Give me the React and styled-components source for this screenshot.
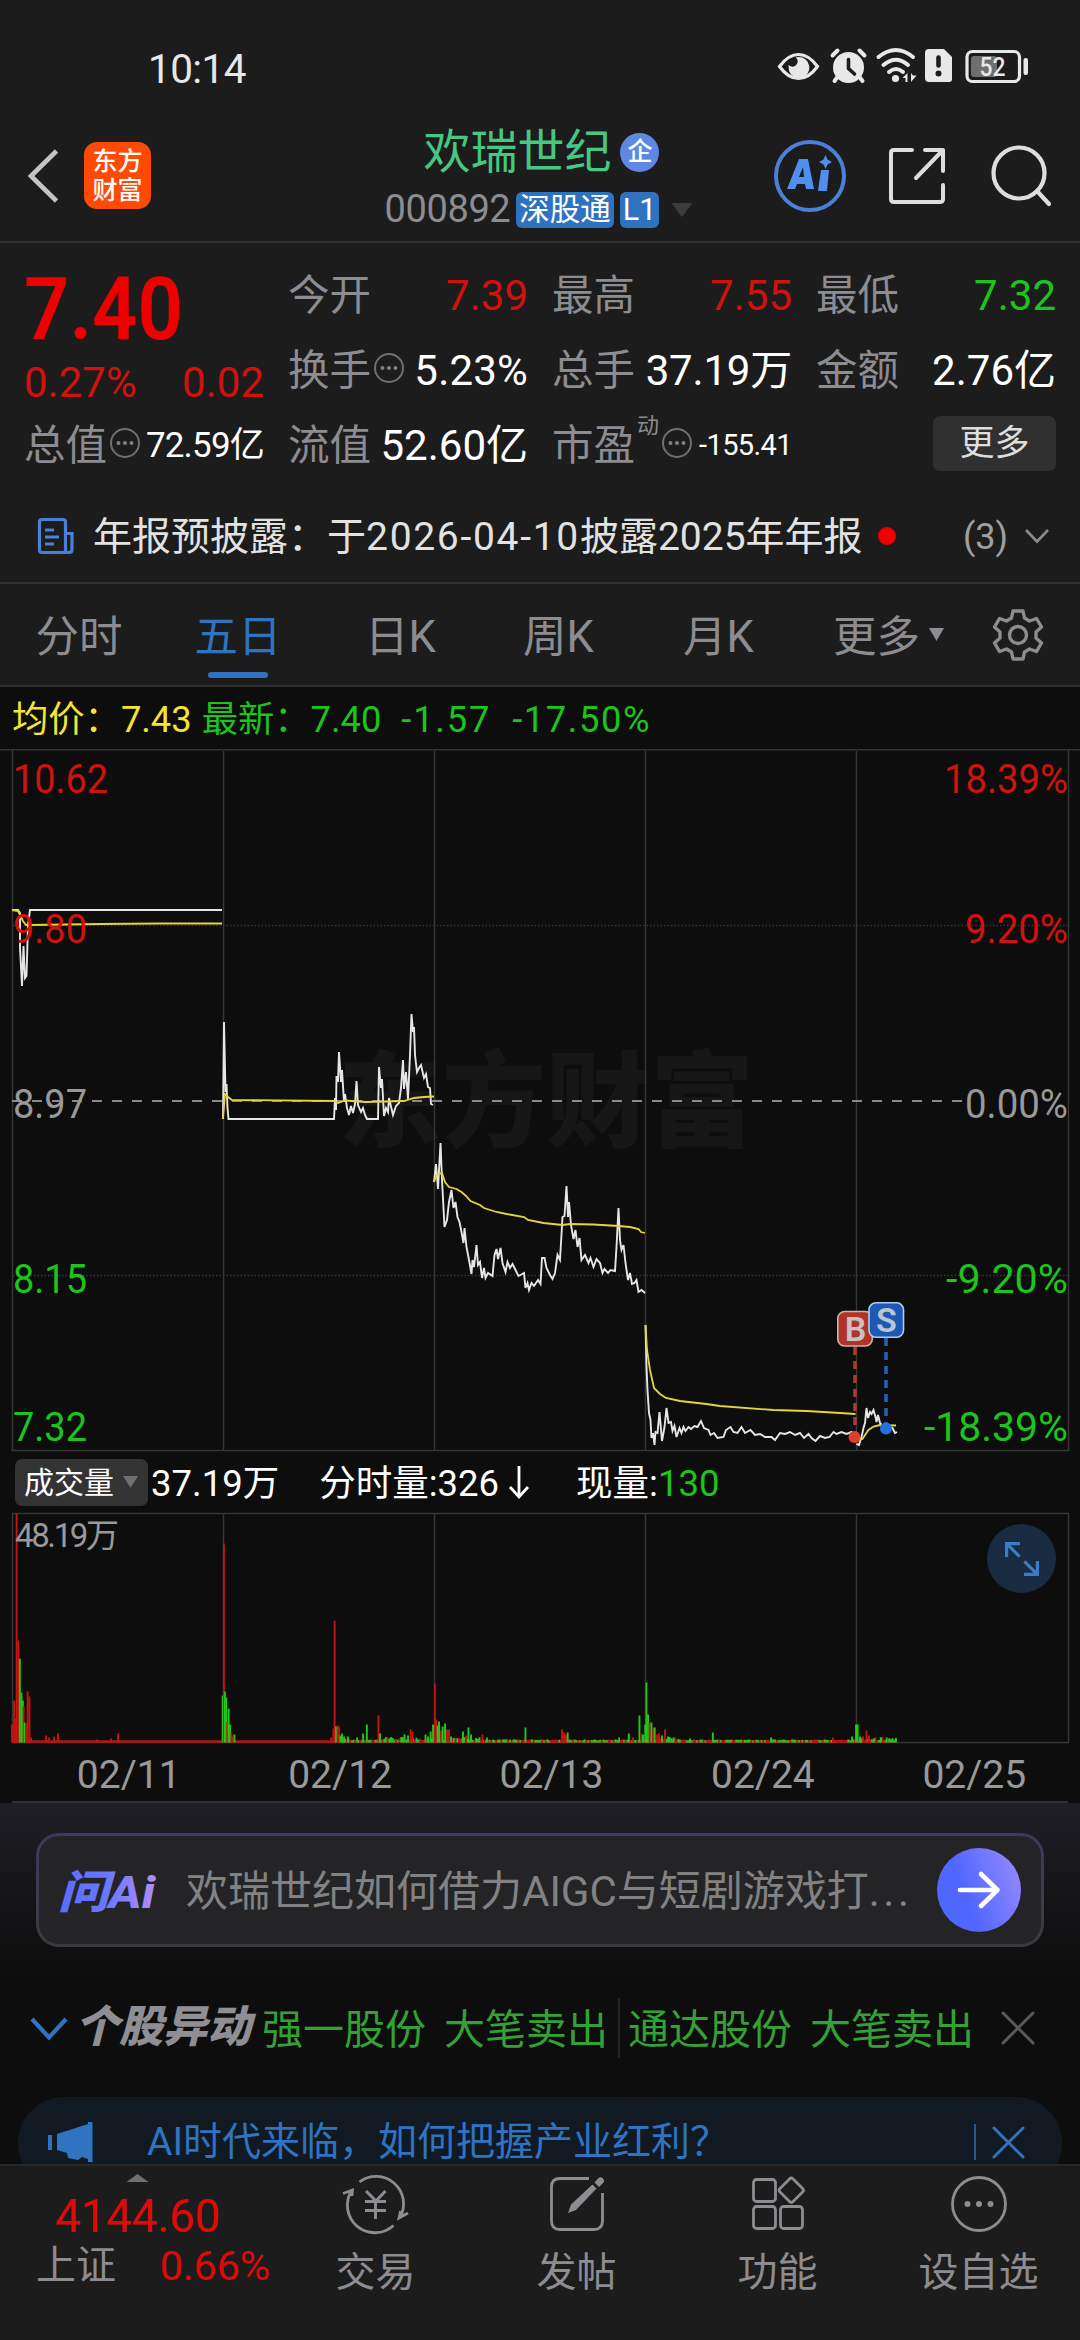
import React from "react";
import styled, { createGlobalStyle } from "styled-components";

const GlobalStyle = createGlobalStyle`
  * {
    box-sizing: border-box;
  }
  body {
    margin: 0;
    background: #0d0d0d;
    font-family: Roboto, "Noto Sans CJK SC", sans-serif;
    line-height: 1.3;
    -webkit-font-smoothing: antialiased;
  }
  svg {
    display: block;
    flex: none;
    overflow: visible;
  }
`;

const RED = "#d0120f";
const GREEN = "#1cc41c";
const GRAY = "#8c8c91";
const BLUE = "#2f73c1";

/* ---------- data ---------- */

const quotes = [
  [
    { label: "今开", value: "7.39", color: RED },
    { label: "最高", value: "7.55", color: RED },
    { label: "最低", value: "7.32", color: GREEN },
  ],
  [
    { label: "换手", value: "5.23%", tip: true, ls: 0.2 },
    { label: "总手", value: "37.19万", ls: -0.2 },
    { label: "金额", value: "2.76亿", ls: 0 },
  ],
];

const tabs = [
  { name: "分时", width: 158 },
  { name: "五日", width: 160, active: true },
  { name: "日K", width: 165 },
  { name: "周K", width: 151 },
  { name: "月K", width: 169 },
];

const dates = ["02/11", "02/12", "02/13", "02/24", "02/25"];
const dayLines = [223.5, 434.5, 645.5, 856.5];

// 价格线，每一天一段
const priceLines = [
  "12,910 18,910 20,913 20,948 22,986 23.5,946 25,978 26.5,976 28,925 30,910 222,910",
  "223,1119 224,1022 225.5,1092 226.5,1084 227.5,1108 228.5,1119 334,1119 335,1098 336,1110 336.5,1076 338,1082 339,1052 341,1082 342,1070 344,1102 345,1094 347,1108 349,1115 351,1106 353,1113 355,1104 356.5,1081 358,1105 361,1112 363,1108 365,1115 367,1119 378,1119 379,1067 381,1088 382,1079 384,1116 386,1108 388,1112 389,1098 393,1115 396,1106 399,1103 401,1088 403,1060 404,1089 406,1072 408,1099 410,1055 411.5,1014 413,1032 414,1027 415,1055 417,1072 419,1068 421,1065 424,1078 426,1074 428,1087 430,1088 431,1104 433,1105",
  "434,1182 436,1164 438,1189 440.5,1143 442,1180 444.5,1227 447,1220 449,1202 451.5,1190 453.5,1208 455.5,1202 457.5,1217 459.5,1222 461.5,1232 463.5,1243 464.5,1228 466.5,1247 469,1260 471.5,1274 472.5,1260 474,1267 476.5,1245 478,1265 480,1262 482,1278 484,1268 485.5,1278 488,1273 492.5,1276 494.5,1255 496.5,1249 498,1259 500.5,1248 502.5,1263 505.5,1272 507.5,1262 510,1268 512.5,1264 515.5,1270 518.5,1276 524,1273 525.5,1288 527.5,1283 529,1290 531.5,1283 534,1286 538,1280 540.5,1284 542,1258 544.5,1258 546.5,1268 550,1275 552.5,1279 555,1273 557.5,1255 560,1260 562.5,1217 564.5,1216 566.5,1186 568,1217 569,1202 571,1225 573.5,1239 575.5,1230 577.5,1247 579.5,1238 581.5,1260 585,1255 588.5,1263 590.5,1258 593.5,1267 596.5,1259 600,1263 602.5,1273 604.5,1269 608,1273 610.5,1270 615,1271 616.5,1247 618.5,1208 620,1240 621.5,1250 623.5,1245 625.5,1263 628,1280 630,1273 632,1284 634.5,1283 636.5,1280 638.5,1292 641.5,1290 645,1293",
  "645.5,1325 646.5,1367 647.5,1390 649,1413 650.5,1420 651.5,1438 653,1433 654.5,1445 655.5,1432 657.5,1433 659.5,1412 662,1441 664.5,1427 666.5,1408 668.5,1423 671,1422 672.5,1431 674.5,1426 676.5,1437 679.5,1428 681.5,1433 683.5,1427 685.5,1431 688.5,1427 691,1429 694.5,1426 697.5,1427 701,1421 704,1428 708.5,1430 710.5,1435 714,1433 717.5,1438 723.5,1437 726,1430 730.5,1427 733.5,1432 737.5,1433 741.5,1427 745,1433 750.5,1430 755,1435 760,1434 765,1437 771.5,1437 775,1440 780,1433 785,1434 790,1432 795,1435 800,1433 804,1438 808.5,1434 811.5,1438 815.5,1441 820,1436 825,1438 829.5,1437 833.5,1432 836.5,1434 841.5,1432 846.5,1434 851.5,1432 855,1438",
  "856.5,1444 859,1445 861.5,1437 863.5,1428 865,1423 866.5,1408 868,1418 870,1412 871.5,1414 873.5,1410 875.5,1417 876.5,1422 878,1415 880,1423 883.5,1427 888.5,1430 890.5,1427 892.5,1428 895,1433 897,1432",
];

const averageLines = [
  "12,910 18,911 20,915 23,921 26,925 30,925 100,924 160,923.5 222,923.5",
  "223,1119 225,1094 228,1097 232,1100 334,1101 338,1103 345,1100.5 366,1102 404,1101 414,1098 424,1097 434,1096.5",
  "434,1182 436.5,1175 442,1173 445,1182 449,1187 456.5,1189 461.5,1192 466,1196 470.5,1201 480,1205 484,1208 496.5,1212 506.5,1214 524,1217 528,1220 543.5,1223 562.5,1225 570,1224 593.5,1224.5 618.5,1226 630,1227 638.5,1229 641,1232 645,1233",
  "645.5,1325 647,1350 650,1370 654,1388 660,1394 666,1398 680,1401 706.5,1404 720,1406 773.5,1410 806.5,1411 840,1413 855.5,1414",
  "858.5,1440 862.5,1439 865,1435 868.5,1430 873.5,1426.5 880,1425 896,1425.5",
];

// 主要成交量柱 [x, 高度, 红/绿]
const bigBars = [
  [12, 18, "r"], [14, 42, "r"], [15.5, 24, "r"], [16.6, 229, "r"], [18.2, 102, "r"],
  [19.8, 84, "g"], [21.4, 50, "g"], [22.8, 42, "g"], [23.6, 36, "r"], [24.6, 20, "g"],
  [26, 19, "r"], [27.6, 51, "r"], [29.4, 46, "r"], [31, 5, "r"], [46, 7, "r"],
  [49, 5, "r"], [54, 6, "r"], [58, 9, "r"], [97, 3, "r"], [111, 4, "r"], [118, 9, "r"],
  [222.6, 47, "g"], [223.8, 199, "r"], [224.8, 51, "g"], [226.2, 45, "g"], [227.2, 20, "r"],
  [228.6, 34, "g"], [230, 18, "g"], [231.4, 10, "r"], [232.6, 6, "r"], [234.4, 8, "g"],
  [331, 5, "r"], [334.6, 122, "r"], [333.4, 14, "r"], [336, 16, "g"], [337.6, 17, "r"],
  [339, 16, "r"], [340.4, 7, "g"], [342, 9, "g"], [344, 6, "g"], [348, 6, "g"],
  [357, 5, "g"], [363, 9, "g"], [366.8, 18, "g"], [378.4, 27, "r"], [380, 9, "g"],
  [404.5, 8, "g"], [408, 7, "g"], [410.6, 13, "r"], [412.5, 11, "r"], [425.5, 8, "g"],
  [428, 6, "g"], [430.6, 11, "g"], [433, 18, "g"], [434.8, 59, "r"], [436.2, 23, "r"],
  [437.6, 17, "g"], [439, 21, "g"], [441, 12, "r"], [442.6, 16, "g"], [445, 19, "g"],
  [447, 13, "r"], [449, 13, "r"], [451, 6, "g"], [463, 11, "g"], [466, 7, "r"],
  [468.4, 15, "g"], [471, 8, "g"], [482.4, 8, "r"], [487, 5, "g"], [525.4, 15, "g"],
  [562, 13, "r"], [564, 10, "r"], [566, 8, "r"], [567.6, 10, "g"], [619, 5, "g"],
  [628.8, 9, "g"], [633, 5, "r"], [639.4, 27, "g"], [641.4, 9, "r"], [643, 8, "g"],
  [645.2, 18, "g"], [646.4, 60, "g"], [648, 28, "g"], [649.6, 20, "r"], [651.4, 20, "g"],
  [653, 15, "r"], [654.6, 15, "g"], [657, 8, "r"], [659, 9, "r"], [662, 7, "g"],
  [665, 13, "r"], [668, 6, "g"], [673.5, 5, "g"], [690, 4, "g"], [712.8, 10, "g"],
  [771, 5, "g"], [833, 5, "r"], [852, 6, "g"], [856, 18, "g"], [857.6, 18, "g"],
  [860, 6, "g"], [863, 6, "r"], [866.4, 12, "r"], [869, 7, "r"], [874, 4, "g"],
  [881, 5, "g"], [886.6, 5, "g"],
];

// 零散的小成交量
const smallBars = [];
for (let x = 340, i = 0; x < 897; x += 1.7, i++) {
  const n = Math.abs(Math.sin(i * 12.9898) * 43758.5453) % 1;
  const m = Math.abs(Math.sin(i * 78.233) * 12543.123) % 1;
  const busy = x < 350 || (x > 384 && x < 480) || (x > 645 && x < 680) || x > 856;
  smallBars.push([x, 2 + n * (busy ? 3.5 : 1.2), m > 0.48 ? "g" : "r"]);
}

/* ---------- icons ---------- */

const StatusIcons = () => (
  <svg width="256" height="36" viewBox="776 48 256 36">
    <g fill="none" stroke="#e8e8e8" strokeWidth="3.2">
      <path d="M779.5 66.5C786 57.5 792 54.5 798.5 54.5S811 57.5 817.5 66.5C811 75.5 805 78.5 798.5 78.5S786 75.5 779.5 66.5Z" />
      <path d="M832.5 55.5l5-5M864.5 55.5l-5-5M837.5 77l-3 4M859.5 77l3 4" strokeWidth="4" strokeLinecap="round" />
      <path d="M878.5 57Q896 43 913 57M883.5 65Q896 54.5 908 65M889 72Q896 66 903 72" strokeWidth="4" strokeLinecap="round" />
      <rect x="967" y="51.5" width="52.5" height="30" rx="5.5" />
    </g>
    <g fill="#e8e8e8">
      <path d="M798.5 57a10.5 10.5 0 1 1-9.5 14l-.5-6q5 4 8.5-1 2-4-1.5-6.5Z" />
      <circle cx="848.5" cy="67.5" r="15.5" />
      <circle cx="895.5" cy="78.5" r="3.6" />
      <path d="M902.5 78l5-5v9h-2v-4zM911 73v9l5.5-6.5h-3.5z" />
      <path d="M929 49h15l8 8v22q0 3-3 3h-20q-4 0-4-4v-25q0-4 4-4Z" />
      <rect x="1023.5" y="58" width="4.5" height="17" rx="2" />
    </g>
    <path d="M848.5 59.5v9l6 5.5" fill="none" stroke="#1c1c1c" strokeWidth="3.6" strokeLinecap="round" />
    <path d="M938.5 57.5v8" stroke="#1c1c1c" strokeWidth="4.6" strokeLinecap="round" />
    <circle cx="938.5" cy="73.5" r="3" fill="#1c1c1c" />
    <rect x="971" y="56" width="26" height="21" rx="3" fill="#6e6e6e" />
    <text x="979.5" y="76" fontSize="26" fontWeight="500" fill="#e8e8e8" textLength="26" lengthAdjust="spacingAndGlyphs">
      52
    </text>
  </svg>
);

const BackIcon = () => (
  <svg width="34" height="58" viewBox="0 0 34 58">
    <path d="M30.5 4L5 29l25.5 25" fill="none" stroke="#c4c4c4" strokeWidth="4.6" />
  </svg>
);

const AiIcon = () => (
  <svg width="72" height="72" viewBox="0 0 72 72">
    <circle cx="36" cy="36" r="34" fill="none" stroke="#4b80d6" strokeWidth="4" />
    <g fill="#4f8ff0">
      <path d="M25 19h9l6 30h-8l-1-5h-8l-2 5h-8zM29 27l-4 10h5z" fillRule="evenodd" />
      <path d="M47 30h8l-2 21h-9zM51.5 15l2 4.5 4.5 2.5-4.5 2.5-2 4.5-2-4.5-4.5-2.5 4.5-2.5z" />
    </g>
  </svg>
);

const ShareIcon = () => (
  <svg width="60" height="60" viewBox="0 0 60 60" fill="none" stroke="#dedede" strokeWidth="4">
    <path d="M24 4H6q-3 0-3 3v46q0 3 3 3h46q3 0 3-3V39M37 4h18v21M55 4L28 32" strokeLinecap="round" strokeLinejoin="round" />
  </svg>
);

const SearchIcon = () => (
  <svg width="62" height="62" viewBox="0 0 62 62" fill="none" stroke="#dedede" strokeWidth="4.2">
    <circle cx="29" cy="28" r="25.5" />
    <path d="M47 46l12 13" strokeLinecap="round" />
  </svg>
);

const TipIcon = () => (
  <TipSvg width="32" height="32" viewBox="0 0 32 32">
    <circle cx="16" cy="16" r="14" fill="none" stroke="#707070" strokeWidth="2" />
    <g fill="#808080">
      <circle cx="9.5" cy="16" r="2" />
      <circle cx="16" cy="16" r="2" />
      <circle cx="22.5" cy="16" r="2" />
    </g>
  </TipSvg>
);

const ReportIcon = () => (
  <svg width="38" height="38" viewBox="0 0 38 38" fill="none" stroke="#4a80d8" strokeWidth="3.2">
    <path d="M29 35.5H5q-2.5 0-2.5-2.5V5q0-2.5 2.5-2.5h21q2.5 0 2.5 2.5v28q0 2.5 2.5 2.5h1q3 0 3-3v-16h-6M8 13h9M8 20h14M8 27h9" />
  </svg>
);

const GearIcon = () => (
  <GearSvg width="54" height="54" viewBox="0 0 54 54" fill="none" stroke="#8c8c91" strokeWidth="3.4" strokeLinejoin="round">
    <path d="M22 3h10l1.5 7 5 3 7-2.5L50.5 19l-5.5 5v6l5.5 5-5 8.5-7-2.5-5 3L32 51H22l-1.5-7-5-3-7 2.5L3.5 35 9 30v-6l-5.5-5 5-8.5 7 2.5 5-3z" />
    <circle cx="27" cy="27" r="8.5" />
  </GearSvg>
);

const Chevron = ({ width, height, color, stroke }) => (
  <svg width={width} height={height} viewBox={`0 0 ${width} ${height}`}>
    <path
      d={`M2 2L${width / 2} ${height - 2.5}L${width - 2} 2`}
      fill="none"
      stroke={color}
      strokeWidth={stroke}
    />
  </svg>
);

const Cross = ({ size, color }) => (
  <svg width={size} height={size} viewBox="0 0 34 34">
    <path d="M2 2l30 30M32 2L2 32" stroke={color} strokeWidth="3" strokeLinecap="round" />
  </svg>
);

const AskLogo = () => (
  <svg width="102" height="70" viewBox="56 1854 102 70">
    <defs>
      <linearGradient id="ask" x1="0" x2="1">
        <stop offset="0" stopColor="#5a6cff" />
        <stop offset="0.5" stopColor="#6a78ff" />
        <stop offset="1" stopColor="#b48cf8" />
      </linearGradient>
    </defs>
    <text x="56" y="1907" fontSize="45" fontStyle="italic" fontWeight="800" fill="url(#ask)" textLength="97" lengthAdjust="spacingAndGlyphs">
      问Ai
    </text>
  </svg>
);

const HornIcon = () => (
  <svg width="46" height="40" viewBox="0 0 46 40" fill="#2f73c1">
    <path d="M0 13h4v15H0zM9 12L40 2V0h4.5v40H40v-3l-6-2-4 3-10-2-1-5-10-3z" />
  </svg>
);

const TradeIcon = () => (
  <svg width="68" height="60" viewBox="342 2174 68 60" fill="none" stroke="#8c8c91" strokeWidth="2.8">
    <path d="M359.5 2182A27.5 27.5 0 0 1 400 2217.5M393.5 2225.5A27.5 27.5 0 0 1 352 2190M343 2193.5l9.5-3.5-.5 6M408 2213l-9 5 1.5-7" />
    <path d="M366 2191l10 10 9.5-10M365 2201.5h21M365 2210.5h21M375.5 2201v18" strokeWidth="3" />
  </svg>
);

const PostIcon = () => (
  <svg width="60" height="60" viewBox="547 2174 60 60" fill="none" stroke="#8c8c91" strokeWidth="2.8">
    <path d="M589 2178.5h-29q-8.5 0-8.5 8.5v34q0 8.5 8.5 8.5h34q8.5 0 8.5-8.5v-28" />
    <path d="M568 2213l3-8.5 21.5-20 4 4-20.5 21.5zM594.5 2182.5l4-4.5q2-1.5 4 0t1.5 4l-5 5z" fill="#8c8c91" stroke="none" />
  </svg>
);

const AppsIcon = () => (
  <svg width="60" height="60" viewBox="748 2174 60 60" fill="none" stroke="#8c8c91" strokeWidth="2.8">
    <rect x="753.5" y="2179.5" width="22" height="22" rx="3" />
    <rect x="753.5" y="2206.5" width="22" height="22" rx="3" />
    <rect x="780.5" y="2206.5" width="22" height="22" rx="3" />
    <rect x="782" y="2181" width="18.5" height="18.5" rx="2.5" transform="rotate(45 791.3 2190.3)" />
  </svg>
);

const AddIcon = () => (
  <svg width="60" height="60" viewBox="0 0 60 60">
    <circle cx="30" cy="30" r="26.5" fill="none" stroke="#8c8c91" strokeWidth="2.8" />
    <g fill="#8c8c91">
      <circle cx="18.5" cy="30" r="3" />
      <circle cx="30" cy="30" r="3" />
      <circle cx="41.5" cy="30" r="3" />
    </g>
  </svg>
);

const DownArrow = () => (
  <ArrowSvg width="22" height="34" viewBox="0 0 22 34">
    <path d="M11 1v30M2 22l9 10 9-10" fill="none" stroke="#fff" strokeWidth="2.8" />
  </ArrowSvg>
);

const menus = [
  { name: "交易", icon: <TradeIcon /> },
  { name: "发帖", icon: <PostIcon /> },
  { name: "功能", icon: <AppsIcon /> },
  { name: "设自选", icon: <AddIcon /> },
];

/* ---------- charts ---------- */

const PriceChart = () => {
  const left = [
    ["10.62", 793, RED, 93],
    ["9.80", 942.5, RED, 72],
    ["8.97", 1117.5, "#999", 72],
    ["8.15", 1293, GREEN, 72],
    ["7.32", 1441, GREEN, 72],
  ];
  const right = [
    ["18.39%", 793, RED, 124],
    ["9.20%", 942.5, RED, 103],
    ["0.00%", 1117.5, "#999", 103],
    ["-9.20%", 1292.5, GREEN, 122],
    ["-18.39%", 1440.5, GREEN, 144],
  ];

  return (
    <svg width="1080" height="703" viewBox="0 749 1080 703">
      <text x="546" y="1139" fontSize="104" fontWeight="900" fill="#161616" textAnchor="middle">
        东方财富
      </text>
      <g stroke="#363636" strokeWidth="1.5" fill="none">
        <path d="M0 749.8H1080M12.5 750V1450.5H1068.5V750" />
        {dayLines.map((x) => (
          <path key={x} d={`M${x} 751V1450`} />
        ))}
        <path d="M13 925.5H1068M13 1275.5H1068" strokeDasharray="1.5 2" />
      </g>
      <path d="M12 1101H963" stroke="#8a8a8a" strokeWidth="1.8" strokeDasharray="10 10" />
      {priceLines.map((p, i) => (
        <polyline key={i} points={p} fill="none" stroke="#e6e6e6" strokeWidth="1.9" />
      ))}
      {averageLines.map((p, i) => (
        <polyline key={i} points={p} fill="none" stroke="#e3d63c" strokeWidth="1.8" />
      ))}
      <g fontSize="40.5">
        {left.map(([t, y, c, w]) => (
          <text key={t} x="13" y={y} fill={c} textLength={w + 2} lengthAdjust="spacingAndGlyphs">
            {t}
          </text>
        ))}
        {right.map(([t, y, c, w]) => (
          <text key={t} x={1068 - w} y={y} fill={c} textLength={w} lengthAdjust="spacingAndGlyphs">
            {t}
          </text>
        ))}
      </g>
      <path d="M855 1347V1432" stroke="#a83a2e" strokeWidth="3.6" strokeDasharray="8 6" />
      <path d="M886 1338V1424" stroke="#2561ad" strokeWidth="3.6" strokeDasharray="8 6" />
      <circle cx="854.5" cy="1437" r="6" fill="#e23d2c" />
      <circle cx="886" cy="1428.5" r="6" fill="#2273de" />
      <g strokeWidth="1.6" fontSize="34" fontWeight="600" textAnchor="middle">
        <rect x="837.8" y="1311.5" width="34.5" height="34.5" rx="7" fill="#b03426" stroke="#d0b0b0" />
        <text x="855.5" y="1341" fill="#c9c0c4" stroke="none">B</text>
        <rect x="869" y="1302.8" width="34.5" height="34.5" rx="7" fill="#1a5ab6" stroke="#b8c8e8" />
        <text x="886.3" y="1332.3" fill="#bcc4d0" stroke="none">S</text>
      </g>
    </svg>
  );
};

const VolumeChart = () => (
  <svg width="1080" height="232" viewBox="0 1512 1080 232">
    <g stroke="#363636" strokeWidth="1.5" fill="none">
      <rect x="12.5" y="1513.5" width="1056" height="229" />
      {dayLines.map((x) => (
        <path key={x} d={`M${x} 1514V1742`} />
      ))}
    </g>
    <path d="M12 1741.5H897" stroke="#b01812" strokeWidth="2.4" />
    {smallBars.concat(bigBars).map(([x, h, c], i) => (
      <rect
        key={i}
        x={x - 0.9}
        y={1742.5 - h}
        width="1.9"
        height={h}
        fill={c === "r" ? "#c4140f" : "#22c81c"}
      />
    ))}
    <text x="15" y="1547" fontSize="33" fill="#999" textLength="104">
      48.19万
    </text>
  </svg>
);

/* ---------- page ---------- */

export default function App() {
  return (
    <Page>
      <GlobalStyle />
      <StatusBar>
        <Clock>10:14</Clock>
        <StatusIcons />
      </StatusBar>

      <Header>
        <HeaderLeft>
          <BackIcon />
          <Logo>
            <span>东方</span>
            <span>财富</span>
          </Logo>
        </HeaderLeft>
        <Title>
          <NameRow>
            欢瑞世纪<Company>企</Company>
          </NameRow>
          <CodeRow>
            <Code>000892</Code>
            <Badge>深股通</Badge>
            <Badge>L1</Badge>
            <Triangle $w={21} $h={14} $color="#3c3c3c" $left={6} />
          </CodeRow>
        </Title>
        <HeaderRight>
          <AiIcon />
          <ShareIcon />
          <SearchIcon />
        </HeaderRight>
      </Header>

      <Quote>
        <PriceBox>
          <Price>7.40</Price>
          <Change>
            <span>0.27%</span>
            <span>0.02</span>
          </Change>
        </PriceBox>
        <QuoteGrid>
          {quotes.flat().map((it) => (
            <Cell key={it.label}>
              <Label>{it.label}</Label>
              {it.tip && <TipIcon />}
              <Value $color={it.color} $ls={it.ls}>
                {it.value}
              </Value>
            </Cell>
          ))}
        </QuoteGrid>
      </Quote>
      <QuoteBottom>
        <Cell>
          <Label>总值</Label>
          <TipIcon />
          <Value $size={35} $ls={-0.8}>72.59亿</Value>
        </Cell>
        <Cell>
          <Label>流值</Label>
          <Value>52.60亿</Value>
        </Cell>
        <Cell>
          <Label>市盈</Label>
          <Sup>动</Sup>
          <TipIcon />
          <Value $size={29} $ls={-0.6}>-155.41</Value>
        </Cell>
        <MoreButton>更多</MoreButton>
      </QuoteBottom>

      <Notice>
        <ReportIcon />
        <NoticeText>
          年报预披露：于<Day>2026-04-10</Day>披露2025年年报
        </NoticeText>
        <Dot />
        <NoticeCount>(3)</NoticeCount>
        <Chevron width={26} height={16} color="#8c8c8c" stroke={2.6} />
      </Notice>

      <Tabs>
        {tabs.map((it) => (
          <Tab key={it.name} $width={it.width} $active={it.active}>
            {it.name}
          </Tab>
        ))}
        <Tab $width={171}>
          更多
          <Triangle $w={15} $h={13} $color="#8c8c91" $left={9} $up={8} />
        </Tab>
        <GearIcon />
      </Tabs>

      <Summary>
        <Yellow>均价：7.43</Yellow>
        <Num $left={10}>最新：7.40</Num>
        <Num $left={20} $ls={1.8}>-1.57</Num>
        <Num $left={21} $ls={1.6}>-17.50%</Num>
      </Summary>
      <PriceChart />

      <VolumeBar>
        <Picker>
          成交量
          <Triangle $w={15} $h={12} $color="#707070" $left={9} />
        </Picker>
        <VolumeText $left={3}>37.19万</VolumeText>
        <VolumeText $left={40}>分时量:326</VolumeText>
        <DownArrow />
        <VolumeText $left={46}>
          现量:<em>130</em>
        </VolumeText>
      </VolumeBar>
      <VolumeBox>
        <VolumeChart />
        <ExpandButton>
          <svg width="34" height="34" viewBox="0 0 34 34" fill="none" stroke="#3a7cc6" strokeWidth="3.2">
            <path d="M15 1.6H1.6V15M1.6 1.6l13 13M19 32.4h13.4V19M32.4 32.4l-13-13" />
          </svg>
        </ExpandButton>
      </VolumeBox>
      <Dates>
        {dates.map((d) => (
          <span key={d}>{d}</span>
        ))}
      </Dates>

      <AskArea>
        <AskBox>
          <AskLogo />
          <AskText>
            欢瑞世纪如何借力AIGC与短剧游戏打<Dots>...</Dots>
          </AskText>
          <AskButton>
            <svg width="44" height="38" viewBox="0 0 44 38" fill="none" stroke="#fff" strokeWidth="4.6" strokeLinecap="round" strokeLinejoin="round">
              <path d="M3 19h37M24 3l16.5 16L24 35" />
            </svg>
          </AskButton>
        </AskBox>
      </AskArea>

      <Moves>
        <Chevron width={38} height={23} color={BLUE} stroke={4.2} />
        <MovesTitle>个股异动</MovesTitle>
        <Move $left={9}>强一股份</Move>
        <Move $left={18}>大笔卖出</Move>
        <Divider />
        <Move $left={8}>通达股份</Move>
        <Move $left={18}>大笔卖出</Move>
        <MovesClose>
          <Cross size={34} color="#5a5a5a" />
        </MovesClose>
      </Moves>

      <BannerArea>
        <Banner>
          <HornIcon />
          <BannerText>AI时代来临，如何把握产业红利？</BannerText>
          <BannerLine />
          <Cross size={33} color={BLUE} />
        </Banner>
      </BannerArea>

      <BottomBar>
        <IndexBox>
          <UpTriangle />
          <IndexValue>4144.60</IndexValue>
          <IndexRow>
            <span>上证</span>
            <b>0.66%</b>
          </IndexRow>
        </IndexBox>
        {menus.map((it) => (
          <Menu key={it.name}>
            {it.icon}
            <span>{it.name}</span>
          </Menu>
        ))}
      </BottomBar>
    </Page>
  );
}

const Page = styled.div`
  display: flex;
  flex-direction: column;
  width: 1080px;
  height: 2340px;
  overflow: hidden;
  background-color: #0d0d0d;
  white-space: nowrap;
`;

const TipSvg = styled.svg`
  margin: -6px 0 0 2px;
`;

const GearSvg = styled.svg`
  margin-left: 17px;
`;

const ArrowSvg = styled.svg`
  margin-left: 9px;
`;

const StatusBar = styled.div`
  display: flex;
  justify-content: space-between;
  align-items: flex-start;
  height: 110px;
  padding: 48px 48px 0 148px;
  background-color: #1c1c1c;
`;

const Clock = styled.div`
  font-size: 40.5px;
  line-height: 43px;
  letter-spacing: -0.6px;
  color: #e8e8e8;
`;

const Header = styled.div`
  display: grid;
  grid-template-columns: 1fr auto 1fr;
  height: 133px;
  border-bottom: 2px solid #303030;
  background-color: #1c1c1c;
`;

const HeaderLeft = styled.div`
  display: flex;
  align-items: center;
  gap: 24px;
  height: 131px;
  padding-left: 26px;
`;

const Logo = styled.div`
  display: flex;
  flex-direction: column;
  align-items: center;
  justify-content: center;
  width: 67px;
  height: 67px;
  border-radius: 13px;
  background-color: #ff4a05;
  color: #fff;
  font-size: 25px;
  font-weight: 500;
  line-height: 29px;
`;

const Title = styled.div`
  padding-top: 13px;
`;

const NameRow = styled.div`
  display: flex;
  justify-content: center;
  align-items: center;
  gap: 9px;
  height: 58px;
  padding-left: 3px;
  font-size: 47px;
  line-height: 58px;
  color: #45c884;
`;

const Company = styled.span`
  width: 39px;
  height: 39px;
  border-radius: 50%;
  background-color: #5e88e4;
  color: #fff;
  font-size: 25px;
  font-weight: 500;
  line-height: 38px;
  text-align: center;
`;

const CodeRow = styled.div`
  display: flex;
  align-items: center;
  gap: 6px;
  height: 56px;
  margin: 1px 0 0 -3px;
`;

const Code = styled.span`
  color: ${GRAY};
  font-size: 38px;
  letter-spacing: -0.4px;
`;

const Badge = styled.span`
  height: 36px;
  padding: 0 3px;
  border-radius: 6px;
  background-color: #2e72c0;
  color: #fff;
  font-size: 30.5px;
  line-height: 36px;
`;

const Triangle = styled.i`
  width: ${(p) => p.$w}px;
  height: ${(p) => p.$h}px;
  margin-left: ${(p) => p.$left || 0}px;
  margin-bottom: ${(p) => p.$up || 0}px;
  background-color: ${(p) => p.$color};
  clip-path: polygon(0 0, 100% 0, 50% 100%);
`;

const HeaderRight = styled.div`
  display: flex;
  justify-content: flex-end;
  align-items: center;
  height: 131px;
  padding-right: 28px;
  gap: 42px;
`;

const Quote = styled.div`
  display: grid;
  grid-template-columns: 240px 1fr;
  gap: 24px;
  padding: 15px 24px 0;
  height: 164px;
  background-color: #1c1c1c;
`;

const PriceBox = styled.div`
  display: flex;
  flex-direction: column;
`;

const Price = styled.div`
  margin-top: 8px;
  color: #ee0000;
  font-size: 87px;
  font-weight: 600;
  line-height: 86px;
  transform: scaleX(0.915);
  transform-origin: left;
`;

const Change = styled.div`
  display: flex;
  justify-content: space-between;
  margin-top: 9px;
  color: ${RED};
  font-size: 42px;
  line-height: 44px;
`;

const QuoteGrid = styled.div`
  display: grid;
  grid-template-columns: repeat(3, 240px);
  grid-auto-rows: 75px;
  column-gap: 24px;
`;

const Cell = styled.div`
  display: flex;
  align-items: center;
  height: 75px;
`;

const Label = styled.span`
  color: ${GRAY};
  font-size: 41.5px;
  line-height: 75px;
`;

const Value = styled.span`
  margin-left: auto;
  color: ${(p) => p.$color || "#fff"};
  font-size: ${(p) => p.$size || 42}px;
  letter-spacing: ${(p) => p.$ls || 0}px;
  line-height: 75px;
`;

const QuoteBottom = styled.div`
  display: grid;
  grid-template-columns: repeat(4, 240px);
  column-gap: 24px;
  align-items: center;
  height: 84px;
  padding: 0 24px 7px;
  background-color: #1c1c1c;
`;

const Sup = styled.span`
  margin: -38px 0 0 2px;
  color: ${GRAY};
  font-size: 22px;
`;

const MoreButton = styled.div`
  justify-self: end;
  width: 123px;
  height: 55px;
  margin-top: -5px;
  border-radius: 7px;
  background-color: #303030;
  color: #dedede;
  font-size: 35px;
  line-height: 56px;
  text-align: center;
`;

const Notice = styled.div`
  display: flex;
  align-items: center;
  height: 93px;
  padding: 0 30px 1px 37px;
  border-bottom: 2px solid #303030;
  background-color: #1c1c1c;
`;

const NoticeText = styled.span`
  margin-left: 18px;
  padding-top: 2px;
  color: #e2e2e2;
  font-size: 39px;
`;

const Day = styled.span`
  letter-spacing: 1.7px;
`;

const Dot = styled.i`
  width: 18px;
  height: 18px;
  margin-left: 15px;
  border-radius: 50%;
  background-color: #ee0000;
`;

const NoticeCount = styled.span`
  margin: 0 16px 0 auto;
  padding-top: 2px;
  color: #a0a0a0;
  font-size: 36px;
`;

const Tabs = styled.div`
  display: flex;
  align-items: center;
  height: 103px;
  border-bottom: 2px solid #303030;
  background-color: #1c1c1c;
`;

const Tab = styled.div`
  position: relative;
  display: flex;
  justify-content: center;
  align-items: center;
  width: ${(p) => p.$width}px;
  height: 101px;
  padding-top: 8px;
  color: ${(p) => (p.$active ? BLUE : GRAY)};
  font-size: 43.5px;

  &::after {
    content: "";
    display: ${(p) => (p.$active ? "block" : "none")};
    position: absolute;
    bottom: 7px;
    width: 60px;
    height: 6px;
    border-radius: 3px;
    background-color: ${BLUE};
  }
`;

const Summary = styled.div`
  display: flex;
  align-items: center;
  height: 62px;
  padding: 4px 0 0 12px;
  color: ${GREEN};
  font-size: 36.3px;
`;

const Yellow = styled.span`
  color: #f5e532;
`;

const Num = styled.span`
  margin-left: ${(p) => p.$left}px;
  letter-spacing: ${(p) => p.$ls || 0}px;
`;

const VolumeBar = styled.div`
  display: flex;
  align-items: center;
  height: 60px;
  padding-left: 15px;
`;

const Picker = styled.div`
  display: flex;
  align-items: center;
  width: 133px;
  height: 47px;
  padding-left: 9px;
  border-radius: 7px;
  background-color: #333;
  color: #fff;
  font-size: 30px;
`;

const VolumeText = styled.span`
  margin-left: ${(p) => p.$left}px;
  padding-top: 3px;
  color: #fff;
  font-size: 36.5px;

  em {
    color: ${GREEN};
    font-style: normal;
  }
`;

const VolumeBox = styled.div`
  position: relative;
`;

const ExpandButton = styled.div`
  position: absolute;
  top: 12px;
  right: 24px;
  display: flex;
  align-items: center;
  justify-content: center;
  width: 69px;
  height: 69px;
  border-radius: 50%;
  background-color: #182b40;
`;

const Dates = styled.div`
  display: grid;
  grid-template-columns: repeat(5, 211.4px);
  height: 59px;
  margin: 0 12px;
  padding-left: 11px;
  border-bottom: 2px solid #303030;
  color: #999;
  font-size: 39px;
  line-height: 62px;
  text-align: center;
`;

const AskArea = styled.div`
  height: 175px;
  padding: 30px 36px 0;
  background: linear-gradient(#1e1e25, #0d0d0d);
`;

const AskBox = styled.div`
  display: flex;
  align-items: center;
  height: 114px;
  padding: 0 20px 0 19px;
  border: 3px solid transparent;
  border-radius: 23px;
  background: linear-gradient(#242427, #242427) padding-box,
    linear-gradient(#3b3b60, #3a3a3c) border-box;
`;

const AskText = styled.span`
  margin-left: 26px;
  padding-top: 4px;
  color: #828282;
  font-size: 42px;
`;

const Dots = styled.span`
  letter-spacing: 3.5px;
`;

const AskButton = styled.div`
  display: flex;
  align-items: center;
  justify-content: center;
  width: 84px;
  height: 84px;
  margin-left: auto;
  border-radius: 50%;
  background: linear-gradient(70deg, #4f66ff 35%, #9c8cff);
`;

const Moves = styled.div`
  display: flex;
  align-items: center;
  height: 100px;
  padding-left: 30px;
`;

const MovesTitle = styled.span`
  width: 178px;
  margin-left: 7px;
  color: #8e8e93;
  font-size: 44px;
  font-weight: 900;
  font-style: italic;
`;

const Move = styled.span`
  margin-left: ${(p) => p.$left}px;
  padding-top: 5px;
  color: #35a035;
  font-size: 41px;
`;

const Divider = styled.i`
  width: 2px;
  height: 60px;
  margin-left: 10px;
  background-color: #242424;
`;

const MovesClose = styled.div`
  margin-left: 27px;
`;

const BannerArea = styled.div`
  height: 86px;
  padding: 19px 18px 0;
  overflow: hidden;
`;

const Banner = styled.div`
  display: flex;
  align-items: center;
  height: 92px;
  padding: 0 37px 2px 30px;
  border-radius: 46px;
  background-color: #111a23;
`;

const BannerText = styled.span`
  flex: 1;
  margin-left: 53px;
  color: ${BLUE};
  font-size: 39px;
  line-height: 46px;
`;

const BannerLine = styled.i`
  width: 2px;
  height: 36px;
  margin-right: 16px;
  background-color: #26598f;
`;

const BottomBar = styled.div`
  display: grid;
  grid-template-columns: 275px repeat(4, 201px);
  flex: 1;
  border-top: 2px solid #282828;
  background-color: #1c1c1c;
`;

const IndexBox = styled.div`
  display: flex;
  flex-direction: column;
  align-items: center;
  padding-top: 8px;
`;

const UpTriangle = styled.i`
  width: 22px;
  height: 8px;
  background-color: #707070;
  clip-path: polygon(50% 0, 100% 100%, 0 100%);
`;

const IndexValue = styled.div`
  margin-top: 9px;
  color: #dd0a08;
  font-size: 46px;
  line-height: 50px;
  letter-spacing: -0.3px;
`;

const IndexRow = styled.div`
  display: flex;
  justify-content: space-between;
  width: 234px;
  margin: -3px 0 0 31px;
  color: ${GRAY};
  font-size: 40px;
  line-height: 56px;

  b {
    color: #dd0a08;
    font-size: 41.5px;
    font-weight: 400;
    letter-spacing: -0.2px;
  }
`;

const Menu = styled.div`
  display: flex;
  flex-direction: column;
  align-items: center;
  padding-top: 8px;
  color: ${GRAY};
  font-size: 40px;

  span {
    margin-top: 11px;
    line-height: 56px;
  }
`;
